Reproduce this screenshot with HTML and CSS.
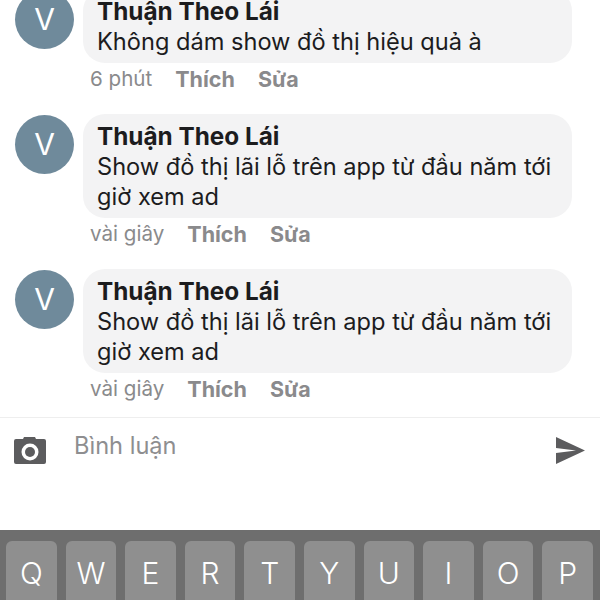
FILE: index.html

```html
<!DOCTYPE html>
<html>
<head>
    <meta charset="utf-8">
    <link rel="stylesheet" href="styles.css">
</head>
<body>
<div class="screen">
    <div class="comments">
        <div class="comment">
            <div class="avatar">V</div>
            <div class="body">
                <div class="bubble">
                    <div class="name">Thuận Theo Lái</div>
                    <div class="text">Không dám show đồ thị hiệu quả à</div>
                </div>
                <div class="meta"><span class="time">6 phút</span><b>Thích</b><b>Sửa</b></div>
            </div>
        </div>
        <div class="comment">
            <div class="avatar">V</div>
            <div class="body">
                <div class="bubble">
                    <div class="name">Thuận Theo Lái</div>
                    <div class="text">Show đồ thị lãi lỗ trên app từ đầu năm tới giờ xem ad</div>
                </div>
                <div class="meta"><span class="time">vài giây</span><b>Thích</b><b>Sửa</b></div>
            </div>
        </div>
        <div class="comment">
            <div class="avatar">V</div>
            <div class="body">
                <div class="bubble">
                    <div class="name">Thuận Theo Lái</div>
                    <div class="text">Show đồ thị lãi lỗ trên app từ đầu năm tới giờ xem ad</div>
                </div>
                <div class="meta"><span class="time">vài giây</span><b>Thích</b><b>Sửa</b></div>
            </div>
        </div>
    </div>
    <div class="composer">
        <svg class="camera" width="34" height="30" viewBox="0 0 34 30">
            <path fill="#5c5c5e" d="M10 3 L11 1 H22 L23 3 H31 Q33 3 33 5 V26 Q33 28 31 28 H3 Q1 28 1 26 V5 Q1 3 3 3 Z"/>
            <circle cx="17" cy="16" r="8.5" fill="#fff"/>
            <circle cx="17" cy="16" r="5" fill="#5c5c5e"/>
        </svg>
        <div class="placeholder">Bình luận</div>
        <svg class="send" width="32" height="30" viewBox="0 0 32 30">
            <path fill="#5c5c5e" d="M2 1 L31 14.5 L2 28 V17 L22 14.5 L2 12 Z"/>
        </svg>
    </div>
    <div class="keyboard">
        <div class="key">Q</div>
        <div class="key">W</div>
        <div class="key">E</div>
        <div class="key">R</div>
        <div class="key">T</div>
        <div class="key">Y</div>
        <div class="key">U</div>
        <div class="key">I</div>
        <div class="key">O</div>
        <div class="key">P</div>
    </div>
</div>
</body>
</html>
```

FILE: styles.css

```css
body {
    margin: 0;
    background-color: #fff;
    font-family: Inter, "Liberation Sans", sans-serif;
}

.screen {
    width: 600px;
    height: 600px;
    overflow: hidden;
    display: flex;
    flex-direction: column;
}

.comments {
    height: 417px;
    flex: none;
    margin-top: -11px;
    padding-bottom: 11px;
}

.comment {
    display: flex;
    gap: 9px;
    padding-left: 15px;
}

.avatar {
    width: 59px;
    height: 59px;
    flex: none;
    margin-top: 1px;
    border-radius: 50%;
    background-color: #6f8a9b;
    color: #fff;
    font-size: 30px;
    line-height: 59px;
    text-align: center;
}

.body {
    width: 489px;
}

.bubble {
    padding: 7px 14px 6px;
    border-radius: 22px;
    background-color: #f3f3f4;
    color: #1c1c1e;
    font-size: 23.6px;
    line-height: 30px;
}

.name {
    font-size: 24.3px;
    font-weight: 700;
}

.text {
    margin-top: 1px;
}

.meta {
    height: 51px;
    display: flex;
    gap: 23px;
    padding-left: 7px;
    box-sizing: border-box;
    color: #8a8a8c;
    font-size: 20.6px;
    line-height: 32px;
}

.meta b {
    font-size: 21.5px;
    font-weight: 700;
}

.composer {
    height: 112px;
    flex: none;
    display: flex;
    align-items: flex-start;
    border-top: 1px solid #eeeeee;
}

.camera {
    margin: 18px 0 0 13px;
}

.placeholder {
    flex: 1;
    margin: 13px 0 0 27px;
    color: #8e8e90;
    font-size: 23.6px;
    line-height: 30px;
}

.send {
    margin: 18px 14px 0 0;
}

.keyboard {
    flex: 1;
    display: grid;
    grid-template-columns: repeat(10, 1fr);
    gap: 9px;
    padding: 11px 7px 0 6px;
    background-color: #6e6e6e;
}

.key {
    height: 70px;
    border-radius: 6px;
    background-color: #8f8f8f;
    color: #fff;
    font-size: 30px;
    font-weight: 300;
    line-height: 64px;
    text-align: center;
}
```
